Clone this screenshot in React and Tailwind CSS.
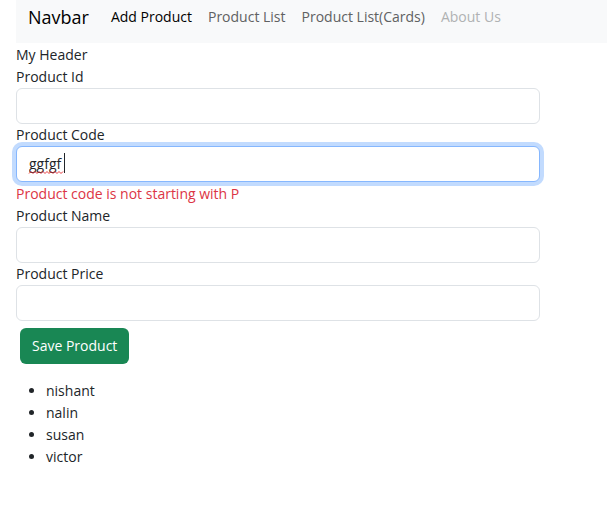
import { useState } from "react";

const links = [
  { label: "Add Product", style: "text-black" },
  { label: "Product List", style: "text-[#606162]" },
  { label: "Product List(Cards)", style: "text-[#606162]" },
  { label: "About Us", style: "text-[#b0b2b3]" },
];

const products = ["nishant", "nalin", "susan", "victor"];

function Navbar() {
  return (
    <nav className="flex h-[43px] items-center bg-[#f8f9fa] px-3 pb-2.5 whitespace-nowrap">
      <a href="#home" className="mr-3.5 text-lg leading-7 text-black">Navbar</a>
      <ul className="flex">
        {links.map(({ label, style }) => (
          <li key={label}>
            <a href="#page" className={`px-2 ${style}`}>{label}</a>
          </li>
        ))}
      </ul>
    </nav>
  );
}

// Spelling underline and text caret, laid over the end of the typed word.
function SpellingMark() {
  return (
    <svg
      className="pointer-events-none absolute top-1.5 left-3"
      width="38"
      height="24"
      fill="none"
      aria-hidden="true"
    >
      <path
        d="M1 21.5l2-2 2 2 2-2 2 2 2-2 2 2 2-2 2 2 2-2 2 2 2-2 2 2 2-2 2 2 2-2 2 2 2-2"
        stroke="#e8383d"
      />
      <path d="M36.5 1v20" stroke="#212529" />
    </svg>
  );
}

function Field({ id, label, error, children, ...rest }) {
  return (
    <div>
      <label htmlFor={id} className="block">{label}</label>
      <div className="relative">
        <input
          id={id}
          type="text"
          autoComplete="off"
          className="block h-9 w-full rounded-md border border-[#dee2e6] bg-white px-3 pb-0.5 text-[#212529] caret-transparent outline-none focus:border-[#86b7fe] focus:ring-4 focus:ring-[#c2dbfe]"
          {...rest}
        />
        {children}
      </div>
      {error && <p className="pt-px text-[#dc3545]">{error}</p>}
    </div>
  );
}

export default function App() {
  const [code, setCode] = useState("ggfgf");
  return (
    <div className="bg-white pl-4 font-['Open_Sans',sans-serif] text-sm leading-[22px] text-[#212529]">
      <Navbar />
      <div className="pt-px">My Header</div>
      <form className="pr-[67px]" onSubmit={(e) => e.preventDefault()}>
        <Field id="product-id" label="Product Id" />
        <Field
          id="product-code"
          label="Product Code"
          value={code}
          onChange={(e) => setCode(e.target.value)}
          autoFocus
          spellCheck={false}
          error={code.startsWith("P") ? "" : "Product code is not starting with P"}
        >
          {code === "ggfgf" && <SpellingMark />}
        </Field>
        <Field id="product-name" label="Product Name" />
        <Field id="product-price" label="Product Price" />
        <button type="submit" className="m-1 mt-[7px] h-9 rounded-md bg-[#198754] px-3 text-white">
          Save Product
        </button>
      </form>
      <ul className="mt-3 list-disc pl-[30px]">
        {products.map((name) => (
          <li key={name}>{name}</li>
        ))}
      </ul>
    </div>
  );
}
